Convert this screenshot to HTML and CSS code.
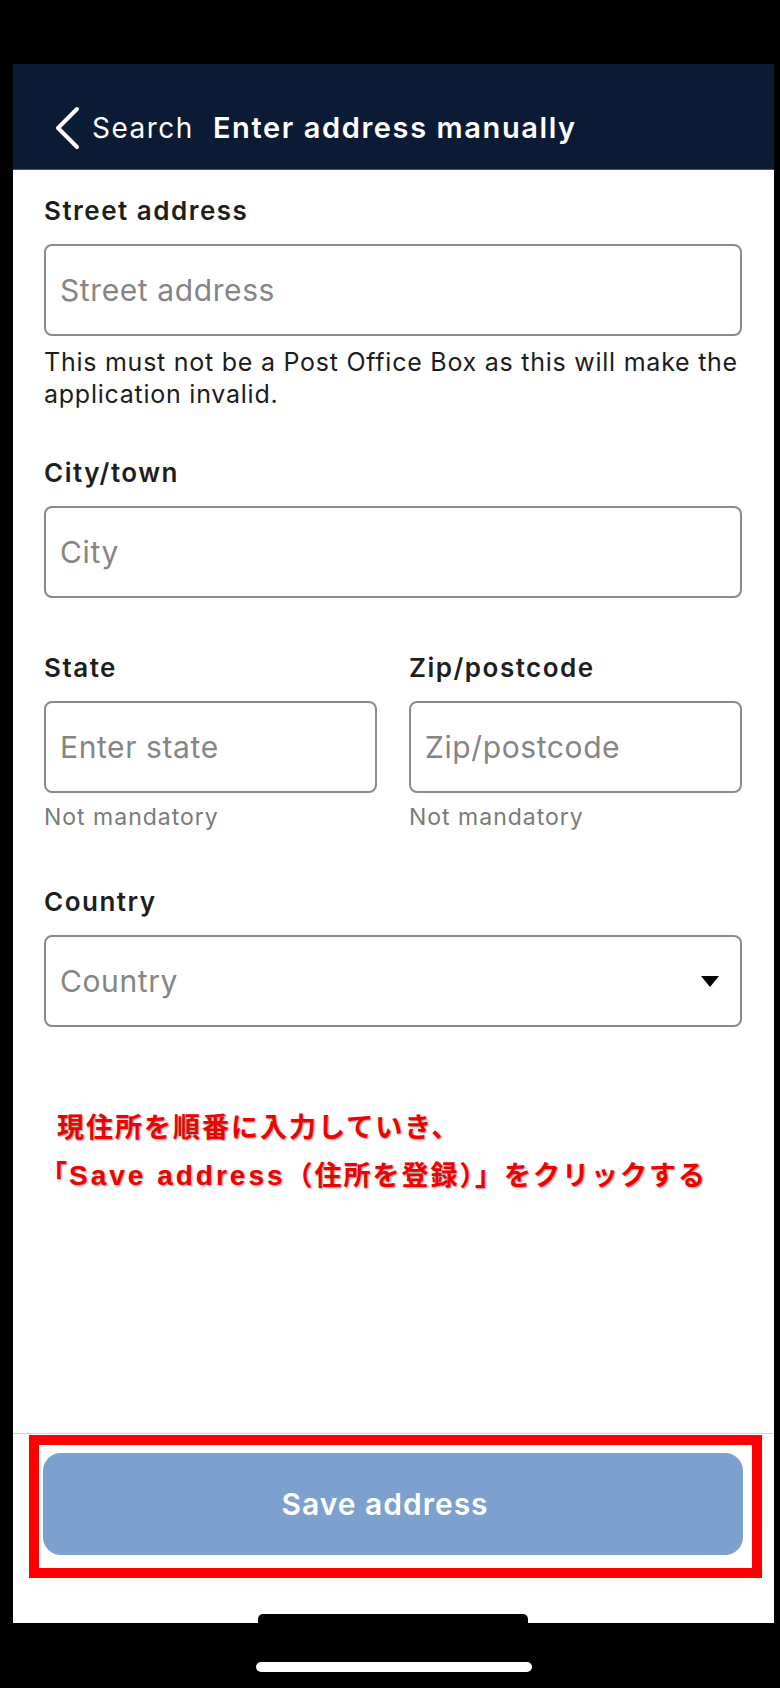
FILE: index.html
```html
<!DOCTYPE html>
<html lang="en">
<head>
  <meta charset="UTF-8">
  <meta name="viewport" content="width=device-width, initial-scale=1.0">
  <title>Enter address manually</title>
  <link rel="stylesheet" href="styles.css">
</head>
<body>
  <div class="device">
    <div class="screen">
      <header class="navbar">
        <a class="back" href="#">
          <svg class="chevron" width="28" height="44" viewBox="0 0 28 44">
            <path d="M24 3 L5 22 L24 41" />
          </svg>
          <span>Search</span>
        </a>
        <h1>Enter address manually</h1>
      </header>

      <main class="form">
        <div class="field field-street">
          <label for="street">Street address</label>
          <input type="text" id="street" placeholder="Street address" />
          <p class="note">This must not be a Post Office Box as this will make the application invalid.</p>
        </div>

        <div class="field">
          <label for="city">City/town</label>
          <input type="text" id="city" placeholder="City" />
        </div>

        <div class="field-row">
          <div class="field">
            <label for="state">State</label>
            <input type="text" id="state" placeholder="Enter state" />
            <p class="hint">Not mandatory</p>
          </div>
          <div class="field">
            <label for="zip">Zip/postcode</label>
            <input type="text" id="zip" placeholder="Zip/postcode" />
            <p class="hint">Not mandatory</p>
          </div>
        </div>

        <div class="field">
          <label>Country</label>
          <div class="select">
            <span>Country</span>
            <svg width="18" height="11" viewBox="0 0 18 11"><path d="M0 0 H18 L9 11 Z" /></svg>
          </div>
        </div>

        <p class="annotation">
          <span class="line">現住所を順番に入力していき、</span>
          <span class="line line-two">「<span class="latin">Save address</span>（住所を登録）」をクリックする</span>
        </p>
      </main>

      <footer class="actions">
        <button class="save">Save address</button>
        <div class="mark"></div>
        <div class="home-bar"></div>
      </footer>
    </div>
    <div class="outer-bar"></div>
  </div>
</body>
</html>
```

FILE: styles.css
```css
body {
  margin: 0;
  background-color: #000;
  font-family: Inter, "Noto Sans", sans-serif;
}
.device {
  width: 780px;
  height: 1688px;
  padding: 64px 6px 0 13px;
  box-sizing: border-box;
  overflow: hidden;
}
.screen {
  width: 761px;
  height: 1559px;
  background-color: #fff;
  display: flex;
  flex-direction: column;
}

/* nav bar */
.navbar {
  height: 106px;
  box-sizing: border-box;
  padding: 22px 0 0 40px;
  background-color: #0c1b35;
  border-bottom: 1px solid #4a5569;
  display: flex;
  align-items: center;
  color: #fff;
}
.back {
  display: flex;
  align-items: center;
  color: #fff;
  text-decoration: none;
  font-size: 28px;
  font-weight: 400;
  letter-spacing: 1.5px;
}
.chevron {
  margin-right: 11px;
}
.chevron path {
  fill: none;
  stroke: #fff;
  stroke-width: 4;
  stroke-linecap: round;
  stroke-linejoin: round;
}
.navbar h1 {
  margin: 0 0 0 19px;
  font-size: 29px;
  font-weight: 600;
  letter-spacing: 1.6px;
}

/* form */
.form {
  flex: 1;
  padding: 26px 32px 0 31px;
}
.field {
  margin-bottom: 55px;
}
.field-street {
  margin-bottom: 48px;
}
.field label {
  display: block;
  font-size: 26px;
  line-height: 30px;
  font-weight: 600;
  letter-spacing: 1.5px;
  color: #1e1e1e;
  margin-bottom: 18px;
}
.field input,
.select {
  display: block;
  width: 100%;
  height: 92px;
  box-sizing: border-box;
  padding: 0 14px;
  border: 2px solid #8b8b8b;
  border-radius: 8px;
  font-family: Inter, sans-serif;
  font-size: 30px;
  letter-spacing: 0.6px;
  color: #222;
  background: #fff;
}
.field input::placeholder {
  color: #858585;
}
.note {
  margin: 10px 0 0;
  font-size: 25px;
  line-height: 32px;
  letter-spacing: 0.75px;
  color: #1c1c1c;
}
.hint {
  margin: 10px 0 0;
  font-size: 23px;
  line-height: 28px;
  letter-spacing: 1px;
  color: #7a7a7a;
}
.field-row {
  display: grid;
  grid-template-columns: 1fr 1fr;
  column-gap: 32px;
}
.field-row .field {
  margin-bottom: 56px;
}
.select {
  display: flex;
  align-items: center;
  justify-content: space-between;
  padding-right: 21px;
  color: #858585;
}
.select path {
  fill: #000;
}

/* red note over the screenshot */
.annotation {
  margin: 78px 0 0 13px;
  font-family: "Liberation Sans", "Noto Sans CJK JP", sans-serif;
  font-size: 27px;
  line-height: 47px;
  font-weight: 700;
  color: #f00000;
  letter-spacing: 2px;
  text-shadow: 1px 1px 2px rgba(0, 0, 0, 0.45);
}
.annotation .line {
  display: block;
}
.line-two {
  margin-left: -17px;
}
.latin {
  font-size: 28px;
  letter-spacing: 3px;
}

/* bottom bar */
.actions {
  position: relative;
  height: 190px;
  box-sizing: border-box;
  border-top: 1px solid #d4d4d4;
  padding: 19px 31px 0 30px;
  display: flex;
  flex-direction: column;
}
.save {
  height: 102px;
  padding: 0 16px 0 0;
  border: none;
  border-radius: 18px;
  background-color: #7ca1ce;
  color: #fff;
  font-family: Inter, sans-serif;
  font-size: 30px;
  font-weight: 600;
  letter-spacing: 1px;
}
.mark {
  position: absolute;
  left: 16px;
  top: 1px;
  width: 733px;
  height: 143px;
  box-sizing: border-box;
  border: 10px solid #ff0000;
}
.home-bar {
  margin-top: auto;
  align-self: center;
  width: 270px;
  height: 9px;
  background-color: #000;
  border-radius: 5px 5px 0 0;
}
.outer-bar {
  width: 276px;
  height: 10px;
  margin: 39px auto 0;
  background-color: #fff;
  border-radius: 5px;
}
```
